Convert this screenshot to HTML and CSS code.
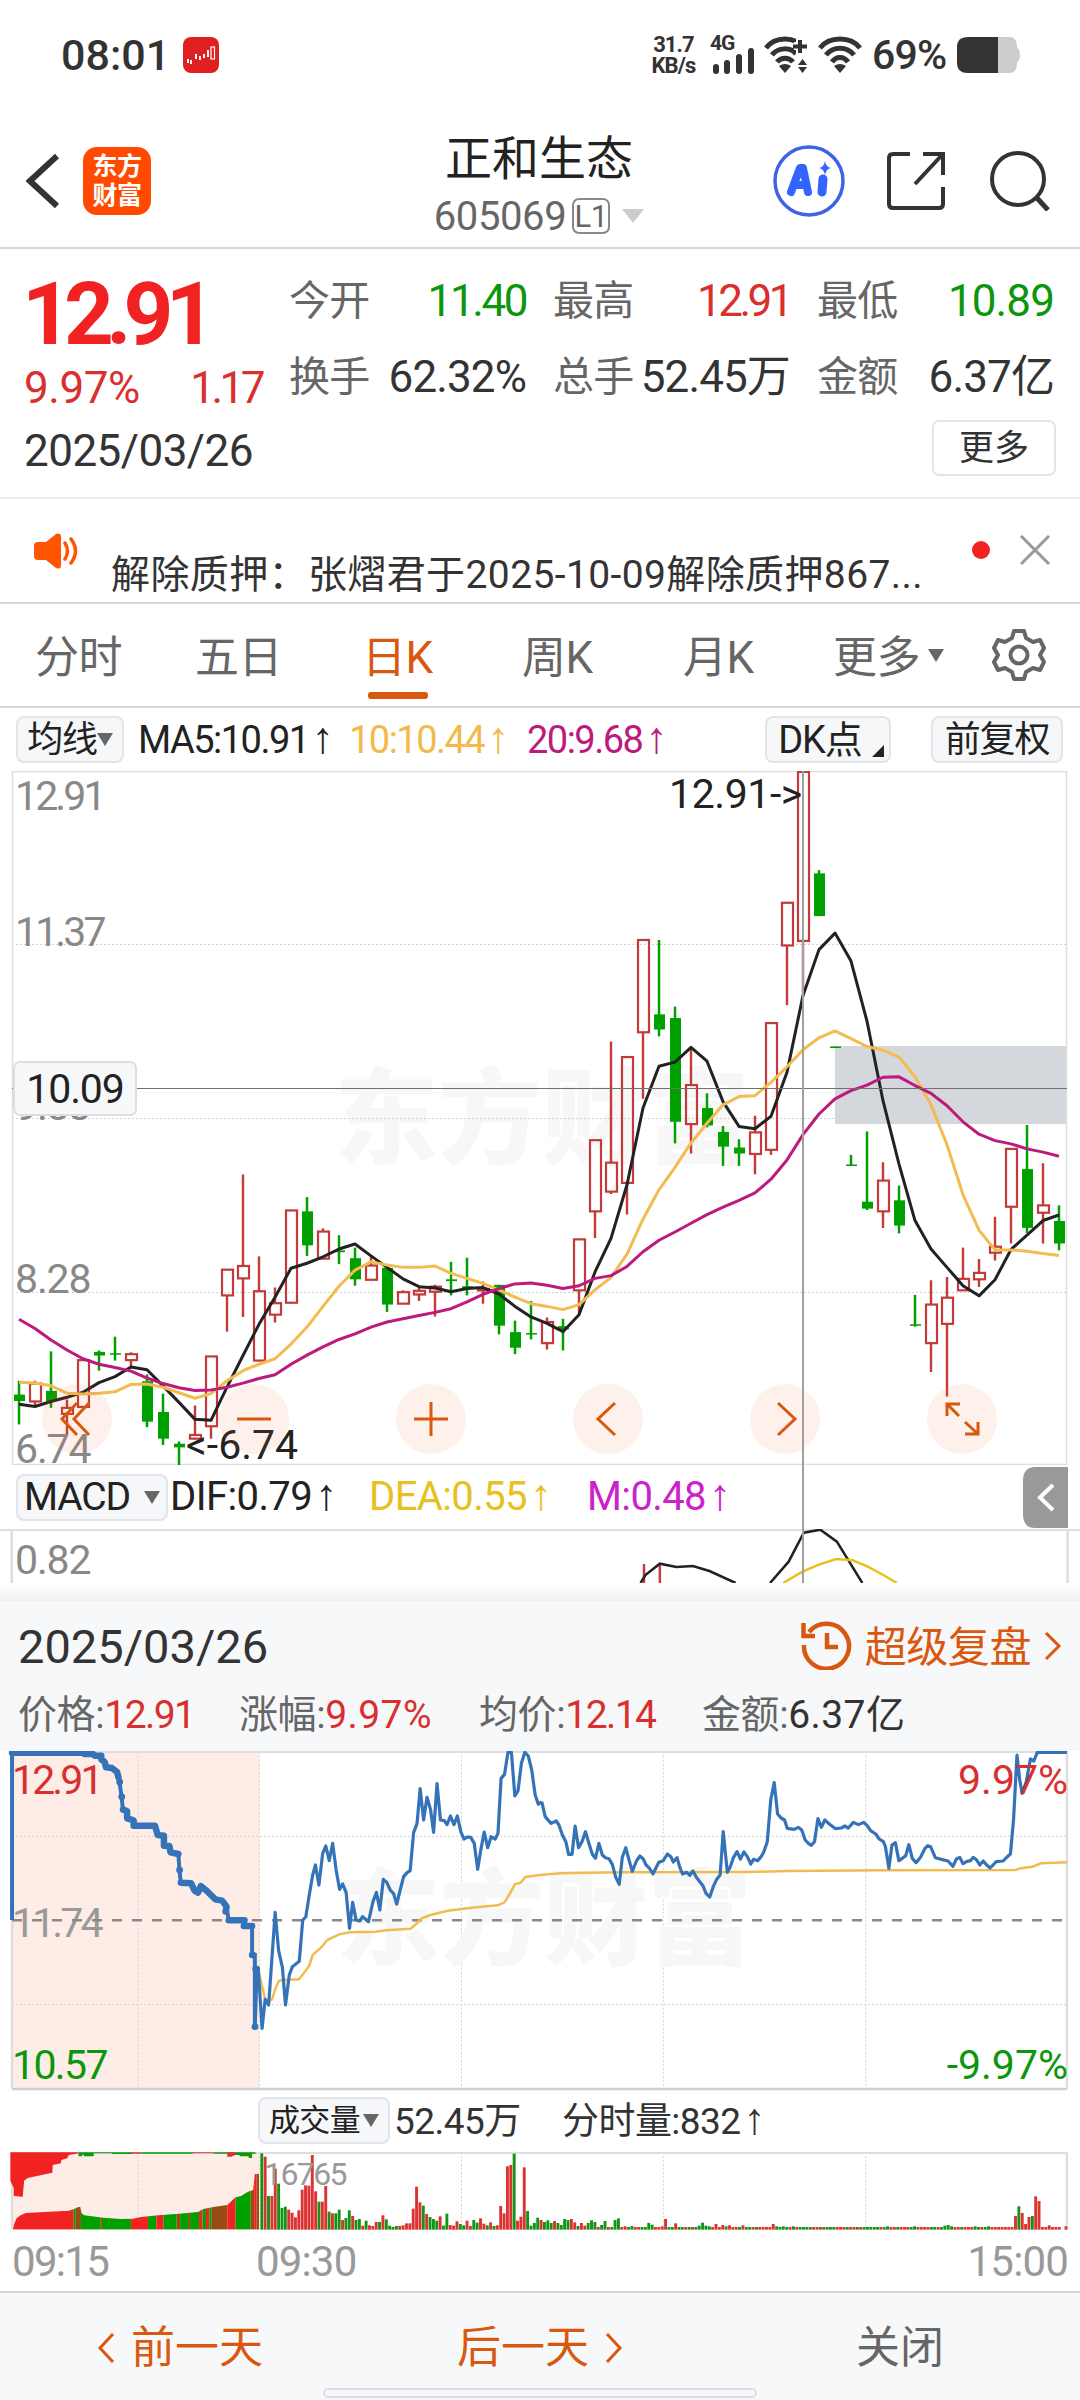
FILE: index.html
```html
<!DOCTYPE html>
<html lang="zh-CN">
<head>
    <meta charset="UTF-8">
    <meta name="viewport" content="width=device-width, initial-scale=1.0">
    <title>正和生态 605069</title>
    <link rel="stylesheet" href="styles.css">
</head>
<body>
    <!-- Status bar -->
    <div class="status-bar">
        <span class="clock">08:01</span>
        <svg class="app-dot" width="36" height="36" viewBox="0 0 36 36">
            <rect width="36" height="36" rx="8" fill="#e02020"/>
            <path d="M5 22v4M8 23v4M13 17v5M17 19v4M21 17v4M25 13v7" stroke="#fff" stroke-width="2"/>
            <rect x="28" y="10" width="3.5" height="12" fill="none" stroke="#fff" stroke-width="1.2"/>
        </svg>
        <div class="status-right">
            <div class="net-speed"><b>31.7</b><b>KB/s</b></div>
            <div class="signal">
                <b>4G</b>
                <svg width="46" height="26" viewBox="0 0 46 26">
                    <path d="M6 19v4M17 15v8M29 9v14M41 3v20" stroke="#333" stroke-width="6" stroke-linecap="round"/>
                </svg>
            </div>
            <svg class="wifi" width="46" height="38" viewBox="0 0 46 38">
                <g fill="none" stroke="#333" stroke-width="5">
                    <path d="M2 12C11 0 31 0 40 12"/>
                    <path d="M8 19C14 11 27 11 32 18"/>
                    <path d="M13 26C17 21 25 21 29 26"/>
                </g>
                <path d="M15 30q6-4 12 0l-6 7z" fill="#333"/>
                <path d="M36 3v15M30 10h14" stroke="#fff" stroke-width="8"/>
                <path d="M36 4v13M29 10.500h14" stroke="#333" stroke-width="4"/>
                <path d="M34 29l4.500-6 4.500 6zM34 31l4.500 6 4.500-6z" fill="#333"/>
            </svg>
            <svg class="wifi" width="44" height="38" viewBox="0 0 44 38">
                <g fill="none" stroke="#333" stroke-width="5">
                    <path d="M2 12C11 0 33 0 42 12"/>
                    <path d="M8 19C15 10 29 10 36 19"/>
                    <path d="M14 26C18 20 26 20 30 26"/>
                </g>
                <path d="M16 30q6-4 12 0l-6 7z" fill="#333"/>
            </svg>
            <span class="battery-text">69%</span>
            <svg width="63" height="36" viewBox="0 0 63 36">
                <path d="M40 0h12q8 0 8 9v2q3 1 3 7t-3 7v2q0 9-8 9H40z" fill="#ccc"/>
                <path d="M41 0v36H11Q0 36 0 26V10Q0 0 11 0z" fill="#333"/>
            </svg>
        </div>
    </div>

    <header>
        <div class="header-left">
            <svg width="34" height="56" viewBox="0 0 34 56"><path d="M31 3L4 28l27 25" fill="none" stroke="#333" stroke-width="6"/></svg>
            <div class="logo">东方<br>财富</div>
        </div>
        <div class="header-title">
            <h1>正和生态</h1>
            <div class="code"><span>605069</span><span class="level">L1</span><i class="tri light"></i></div>
        </div>
        <div class="header-icons">
            <svg class="ai" width="72" height="72" viewBox="0 0 72 72">
                <circle cx="36" cy="36" r="34" fill="#fff" stroke="#3f63e6" stroke-width="3.500"/>
                <path d="M18 47L27 23h3l5 24M21 40h12" fill="none" stroke="#3364ff" stroke-width="8" stroke-linecap="round" stroke-linejoin="round"/>
                <path d="M50 34L49 47" stroke="#3364ff" stroke-width="9" stroke-linecap="round"/>
                <path d="M52 16q1 6 6 7-5 1-6 7-1-6-6-7 5-1 6-7z" fill="#3364ff"/>
            </svg>
            <svg width="58" height="58" viewBox="0 0 58 58">
                <path d="M23 2H6Q2 2 2 6v46q0 4 4 4h46q4 0 4-4V35M36 2h20v21M55 3L28 32" fill="none" stroke="#333" stroke-width="4"/>
            </svg>
            <svg width="60" height="60" viewBox="0 0 60 60">
                <circle cx="28" cy="28" r="26" fill="none" stroke="#333" stroke-width="4"/>
                <path d="M46 46L58 59" stroke="#333" stroke-width="5"/>
            </svg>
        </div>
    </header>

    <!-- Quote summary -->
    <section class="quote">
        <div class="price-col">
            <div class="price">12.91</div>
            <div class="change"><span>9.97%</span><span class="n1">1.17</span></div>
        </div>
        <div class="stats">
            <div><label>今开</label><span class="green n1">11.40</span></div>
            <div><label>最高</label><span class="red n1">12.91</span></div>
            <div><label>最低</label><span class="green">10.89</span></div>
            <div><label>换手</label><span>62.32%</span></div>
            <div><label>总手</label><span>52.45万</span></div>
            <div><label>金额</label><span>6.37亿</span></div>
        </div>
        <div class="quote-date">2025/03/26</div>
        <button class="more-btn">更多</button>
    </section>

    <section class="notice">
        <svg class="speaker" width="46" height="36" viewBox="0 0 46 36">
            <path d="M4 9h8L22 1q5-2 5 3v28q0 5-5 3l-10-8H4q-4 0-4-4V13q0-4 4-4z" fill="#ff5500"/>
            <path d="M31 10q5 8 0 16M37 6q9 12 0 24" fill="none" stroke="#ff5500" stroke-width="3.500" stroke-linecap="round"/>
        </svg>
        <p>解除质押：张熠君于2025-10-09解除质押867...</p>
        <i class="dot"></i>
        <svg class="close" width="30" height="30" viewBox="0 0 30 30"><path d="M1 1l28 28M29 1L1 29" stroke="#999" stroke-width="3"/></svg>
    </section>

    <nav class="tabs">
        <a>分时</a>
        <a>五日</a>
        <a class="active">日K</a>
        <a>周K</a>
        <a>月K</a>
        <a>更多<i class="tri"></i></a>
        <svg width="54" height="54" viewBox="0 0 54 54" fill="none" stroke="#666" stroke-width="4">
            <path d="M22 3h10l2 7 7 4 7-2 4 8-4 7 4 7-4 8-7-2-7 4-2 7H22l-2-7-7-4-7 2-4-8 4-7-4-7 4-8 7 2 7-4z" stroke-linejoin="round"/>
            <circle cx="27" cy="27" r="8.500"/>
        </svg>
    </nav>

    <div class="ind-row ma-row">
        <button class="chip">均线<i class="tri"></i></button>
        <span class="ma5">MA5:10.91<em>↑</em></span>
        <span class="ma10">10:10.44<em>↑</em></span>
        <span class="ma20">20:9.68<em>↑</em></span>
        <button class="chip dk">DK点<i class="corner"></i></button>
        <button class="chip fq">前复权</button>
    </div>

    <!-- Daily candles -->
    <div class="k-chart">
        <div class="watermark">东方财富</div>
        <svg id="kline" width="1080" height="694" viewBox="0 0 1080 694">
            <g stroke="#d2d2d2" stroke-width="1" stroke-dasharray="2 2">
                <path d="M12 173.500H1067M12 347.500H1067M12 521.500H1067"/>
            </g>
            <rect x="835" y="275" width="232" height="78" fill="#d4d7dc"/>
            <rect x="12.500" y="0.500" width="1054" height="693" fill="none" stroke="#dedede" stroke-width="1.500"/>
            <g id="candles"></g>
        </svg>
        <span class="axis n1 a1">12.91</span>
        <span class="axis a2">11.37</span>
        <span class="axis a3">9.83</span>
        <span class="axis a4">8.28</span>
        <span class="axis a5">6.74</span>
        <span class="axis mark-high">12.91-&gt;</span>
        <span class="axis mark-low">&lt;-6.74</span>
        <i class="cross-x"></i>
        <i class="cross-y"></i>
        <span class="cross-price">10.09</span>
        <div class="tools">
            <svg viewBox="-35 -35 70 70"><path d="M0-16L-15 0 0 16M12-16L-3 0 12 16"/></svg>
            <svg viewBox="-35 -35 70 70"><path d="M-17 0H17"/></svg>
            <svg viewBox="-35 -35 70 70"><path d="M-17 0H17M0-17V17"/></svg>
            <svg viewBox="-35 -35 70 70"><path d="M7-16L-10 0 7 16"/></svg>
            <svg viewBox="-35 -35 70 70"><path d="M-7-16L10 0-7 16"/></svg>
            <svg viewBox="-35 -35 70 70"><path d="M-15-3V-15H-2M-15-15L-3-3M16 3V15H3M16 15L3 3"/></svg>
        </div>
    </div>

    <div class="ind-row macd-row">
        <button class="chip macd">MACD<i class="tri"></i></button>
        <span class="ma5">DIF:0.79<em>↑</em></span>
        <span class="dea">DEA:0.55<em>↑</em></span>
        <span class="m">M:0.48<em>↑</em></span>
        <svg class="drawer" width="45" height="61" viewBox="0 0 45 61">
            <path d="M45 0H12Q0 0 0 14V47Q0 61 12 61H45z" fill="#999"/>
            <path d="M30 18L17 30.500 30 43" fill="none" stroke="#fff" stroke-width="4"/>
        </svg>
    </div>
    <div class="macd-chart">
        <svg width="1080" height="54" viewBox="0 447 1568 162" preserveAspectRatio="none">
            <path class="line" stroke="#dedede" d="M17 609V447M1550 609V447"/>
            <path class="line" stroke="#c83c3c" d="M935 609V552M958 609V556"/>
            <path class="line" stroke="#222" d="M930 609L937 585 958 551 982 561 1006 558 1030 573 1068 609M1118 609L1145 545 1167 458 1191 449 1215 485 1252 609"/>
            <path class="line" stroke="#e8c020" d="M1137 609L1165 575 1190 553 1214 537 1238 541 1260 560 1285 588 1302 609"/>
        </svg>
        <span class="axis">0.82</span>
    </div>
    <div class="sheet-shadow"></div>

    <!-- Single day panel -->
    <section class="day-head">
        <div class="day-title">
            <span class="day-date">2025/03/26</span>
            <svg width="52" height="50" viewBox="0 0 52 50" fill="none" stroke="#d9580f" stroke-width="4.500">
                <path d="M8 12A22.500 22.500 0 1 1 3 25"/>
                <path d="M2.500 3v13H14M26 13v14h11"/>
            </svg>
            <span class="replay">超级复盘</span>
            <svg width="18" height="30" viewBox="0 0 18 30"><path d="M2 2l13 13L2 28" fill="none" stroke="#d9580f" stroke-width="3"/></svg>
        </div>
        <div class="day-stats">
            <span>价格:<b class="red">12.91</b></span>
            <span>涨幅:<b class="red wide">9.97%</b></span>
            <span>均价:<b class="red">12.14</b></span>
            <span>金额:<b class="wide">6.37亿</b></span>
        </div>
    </section>

    <div class="day-chart">
        <svg width="1080" height="340" viewBox="0 33 3136 1020" preserveAspectRatio="none">
            <rect x="35" y="35" width="718" height="1012" fill="#fdede6"/>
            <path class="grid" d="M35 289H3098M35 794H3098M400 35V1047M753 35V1047M1340 35V1047M1926 35V1047M2514 35V1047"/>
            <path class="line" stroke="#dedede" d="M35 1047V35H3098V1047"/>
            <path class="line" stroke="#cfcfcf" d="M35 1047H3098"/>
        </svg>
        <div class="watermark">东方财富</div>
        <span class="lbl n1 mid">11.74</span>
        <svg width="1080" height="340" viewBox="0 33 3136 1020" preserveAspectRatio="none">
            <path class="line" stroke="#888" stroke-dasharray="10 10" d="M35 541H3098"/>
            <polyline class="line" stroke="#f0bc50" points="750,690 770,778 780,783 790,778 800,745 810,723 820,720 868,718 882,700 898,677 908,645 935,620 950,600 985,583 1015,577 1090,575 1120,571 1192,566 1205,555 1225,535 1250,525 1300,512 1370,503 1445,496 1465,487 1478,465 1495,433 1512,428 1526,411 1568,405 1628,400 1698,398 1818,397 2168,396 2288,393 2568,391 2948,390 2963,385 2998,380 3023,370 3098,367"/>
            <!-- call auction -->
            <polyline class="line auction" points="35,540 35,37 232,37"/>
            <path class="line auction" d="M340 96L347 126 353 170 357 209M518 342L521 390 525 428M658 500L664 541M710 541V558H732V645H740V860L745 687"/>
            <path class="line ticks" d="M35 38H240L245 42H270L275 47H294V58L304 66 308 82 325 84 340 96 344 112M347 126h1M353 170h1M357 209L369 213V235L388 241V257H450L458 285 476 287V317L492 318 495 337 518 342M521 390h1M525 428L555 430 565 452 575 458 583 438 600 452 625 478 645 482 658 500 655 515M664 541H710M708 558H732M732 645h3M740 860h1M742 687h4"/>
            <polyline class="line price-line" points="745,687 750,687 761,865 770,778 780,795 799,517 809,632 820,682 829,795 840,705 849,680 869,664 879,541 888,530 898,465 908,405 916,375 926,435 937,340 946,318 956,362 966,310 976,390 986,448 995,432 1005,457 1015,565 1024,487 1034,540 1044,543 1053,530 1070,545 1083,485 1093,457 1103,510 1113,418 1123,427 1133,450 1143,461 1152,492 1162,450 1172,410 1182,398 1191,392 1201,278 1211,250 1220,146 1230,240 1240,172 1250,208 1259,277 1269,131 1279,240 1290,242 1298,254 1308,228 1318,254 1328,228 1338,275 1347,297 1357,291 1367,292 1377,310 1387,388 1397,325 1406,276 1416,323 1426,290 1438,297 1446,280 1455,115 1465,103 1475,37 1485,37 1495,168 1504,153 1514,70 1524,37 1534,48 1544,90 1554,165 1563,193 1573,185"/>
            <polyline class="line price-line" transform="translate(1568 0)" points="5,185 15,230 32,250 47,243 55,255 65,285 75,305 83,343 93,343 102,258 112,323 122,305 132,275 142,310 152,343 161,355 171,310 181,345 190,353 200,356 210,373 220,412 230,433 239,352 249,323 259,362 268,394 280,363 290,348 300,357 308,375 318,385 328,402 345,367 358,362 370,342 380,350 387,366 398,353 406,382 414,402 426,397 435,406 444,393 454,412 464,425 473,437 482,460 493,471 503,440 513,418 523,405 532,275 544,397 552,382 562,352 572,335 582,357 592,336 602,350 612,372 620,358 632,362 642,350 650,335 660,305 670,180 680,128 690,222 700,234 710,240 718,265 738,268 750,262 760,270 770,300 780,311 788,316 797,305 807,236 817,262 827,240 840,252 858,266 875,264 885,258 895,264 910,247 925,254 940,247 950,257 960,272 975,282 985,297 997,305 1003,320 1013,385 1022,315 1032,308 1042,362 1052,355 1062,347 1071,314 1081,355 1092,368 1105,352 1118,325 1126,317 1134,320 1148,353 1165,358 1185,363 1199,379 1209,357 1219,352 1228,371 1240,364 1250,362 1258,352 1268,360 1277,375 1287,363 1297,375 1307,384 1325,365 1345,363 1357,350 1366,342 1375,240 1385,45 1393,120 1400,160 1412,125 1424,57 1434,63 1444,37 1530,37"/>
        </svg>
        <span class="lbl n1 top red">12.91</span>
        <span class="lbl bottom green">10.57</span>
        <span class="lbl top right red">9.97%</span>
        <span class="lbl bottom right green">-9.97%</span>
    </div>

    <div class="vol-head">
        <button class="chip">成交量<i class="tri"></i></button>
        <span class="vol-total">52.45万</span>
        <span>分时量:832<em>↑</em></span>
    </div>
    <div class="vol-chart">
        <svg width="1080" height="78" viewBox="0 36 3136 234" preserveAspectRatio="none">
            <defs>
                <clipPath id="pre">
                    <polygon points="37,269 42,250 48,235 60,226 75,219 200,212 215,207 228,201 233,201 237,220 245,226 300,233 350,237 385,236 410,231 460,226 520,221 575,216 590,207 620,201 660,195 684,172 700,168 720,155 735,150 740,102 752,101 752,269"/>
                </clipPath>
            </defs>
            <rect x="35" y="37" width="718" height="232" fill="#fdede6"/>
            <path class="grid" d="M400 37V269M753 37V269M1340 37V269M1926 37V269M2514 37V269"/>
            <path class="line" stroke="#dedede" d="M35 269V38H3098V269"/>
            <g id="pre-vol" clip-path="url(#pre)"></g>
            <polygon fill="#f02222" points="30,37 30,122 40,145 40,168 66,170 70,122 80,114 152,98 153,75 177,70 178,60 195,55 200,45 228,40 228,37"/>
            <path fill="#0c990c" d="M228 37v12h10v-5h5v5h29v-9h53v2h58v-5zM410 37v4h150v-4zM620 37v4h122v-4zM682 37v8h14v4h26v5h10v-13h10v-4z"/>
            <path fill="#e03030" d="M380 37v4h30v-4zM560 37v3h60v-3zM660 37v13h12l12-6v-7z"/>
            <g id="vol"></g>
        </svg>
        <span class="vol-max">16765</span>
    </div>
    <div class="times"><span>09:15</span><span class="t2">09:30</span><span>15:00</span></div>

    <footer>
        <a class="prev"><svg width="18" height="30" viewBox="0 0 18 30"><path d="M16 1L3 15l13 14"/></svg>前一天</a>
        <a class="next">后一天<svg width="18" height="30" viewBox="0 0 18 30"><path d="M2 1l13 14L2 29"/></svg></a>
        <a class="shut">关闭</a>
        <i class="home-bar"></i>
    </footer>

    <script src="chart.js"></script>
</body>
</html>
```
FILE: styles.css
```css
* {
    box-sizing: border-box;
}

body {
    width: 1080px;
    height: 2400px;
    margin: 0;
    overflow: hidden;
    background: #fff;
    color: #333;
    font-family: Roboto, "Noto Sans CJK SC", sans-serif;
    font-size: 38px;
    letter-spacing: -0.03em;
    position: relative;
}

svg {
    display: block;
    flex: none;
}

button {
    font-family: inherit;
    letter-spacing: inherit;
    color: inherit;
    padding: 0;
}

em {
    font-style: normal;
    font-family: "Liberation Sans", sans-serif;
    font-size: 44px;
    line-height: 36px;
    margin-left: 3px;
    letter-spacing: 0;
}

.red {
    color: #d92f2f;
}

.green {
    color: #0c960c;
}

.tri {
    display: inline-block;
    border: 8px solid transparent;
    border-top: 13px solid #666;
    border-bottom: 0;
}

.tri.light {
    border-width: 14px 11px 0;
    border-top-color: #ccc;
}

/* status bar */
.status-bar {
    height: 110px;
    padding: 0 60px 0 61px;
    display: flex;
    align-items: center;
}

.clock {
    font-size: 43px;
    font-weight: 500;
    letter-spacing: 0;
    width: 122px;
}

.status-right {
    margin-left: auto;
    display: flex;
    align-items: center;
}

.net-speed {
    width: 47px;
    margin-right: 13px;
    font-size: 22px;
    line-height: 21px;
    letter-spacing: -0.04em;
    text-align: center;
}

.net-speed b {
    display: block;
}

.signal {
    width: 46px;
    height: 38px;
    font-size: 21px;
    letter-spacing: -0.05em;
}

.signal b {
    display: block;
    height: 12px;
    line-height: 14px;
}

.wifi {
    margin-left: 8px;
}

.battery-text {
    font-size: 41px;
    font-weight: 500;
    width: 92px;
    padding-left: 10px;
    margin-right: 3px;
    letter-spacing: -0.02em;
}

/* header */
header {
    height: 139px;
    padding: 0 30px 0 26px;
    display: grid;
    grid-template-columns: 300px 1fr 300px;
    border-bottom: 2px solid #d6d6d6;
}

.header-left {
    display: flex;
    align-items: center;
    gap: 23px;
    height: 142px;
}

.logo {
    width: 68px;
    height: 68px;
    padding-top: 5px;
    border-radius: 14px;
    background: #ff4a00;
    color: #fff;
    font-size: 25px;
    line-height: 29px;
    font-weight: 700;
    text-align: center;
    letter-spacing: -0.02em;
}

.header-title {
    text-align: center;
    padding: 18px 0 0 2px;
}

h1 {
    margin: 0;
    font-size: 47px;
    line-height: 62px;
    font-weight: 400;
    letter-spacing: 0;
    color: #222;
}

.code {
    display: flex;
    align-items: center;
    justify-content: center;
    height: 52px;
    font-size: 40px;
    letter-spacing: -0.01em;
    color: #666;
}

.level {
    border: 2px solid #888;
    border-radius: 7px;
    width: 38px;
    height: 36px;
    margin: 0 12px 0 6px;
    font-size: 31px;
    line-height: 33px;
}

.header-icons {
    display: flex;
    align-items: center;
    justify-content: flex-end;
    gap: 45px;
    height: 142px;
}

.ai {
    margin-right: -3px;
}

/* quote */
.quote {
    height: 250px;
    padding: 19px 25px 0 24px;
    display: grid;
    grid-template-columns: 238px 1fr;
    grid-template-rows: 151px 64px;
    column-gap: 27px;
    border-bottom: 2px solid #eee;
}

.price {
    font-size: 87px;
    line-height: 92px;
    font-weight: 700;
    letter-spacing: -0.09em;
    margin-left: -2px;
    color: #f02222;
}

.change {
    display: flex;
    justify-content: space-between;
    font-size: 44px;
    line-height: 57px;
    letter-spacing: -0.01em;
    color: #d92f2f;
}

.change .n1 {
    letter-spacing: -0.08em;
}

.stats {
    display: grid;
    grid-template-columns: 237px 237px 237px;
    grid-template-rows: 76px 76px;
    column-gap: 27px;
}

.stats div {
    display: flex;
    justify-content: space-between;
    align-items: center;
    white-space: nowrap;
    font-size: 44px;
    line-height: 76px;
    letter-spacing: -0.02em;
    margin-top: -11px;
}

.stats label {
    font-size: 41px;
    letter-spacing: -0.02em;
    color: #666;
}

.n1,
.stats .n1 {
    letter-spacing: -0.055em;
}

.stats .red {
    letter-spacing: -0.08em;
}

.quote-date {
    font-size: 44px;
    line-height: 64px;
    letter-spacing: -0.012em;
}

.more-btn {
    justify-self: end;
    width: 124px;
    height: 56px;
    margin: 1px -1px 0 0;
    border: 2px solid #e4e4e4;
    border-radius: 7px;
    background: #fff;
    font-size: 35px;
    line-height: 50px;
    padding-top: 2px;
    letter-spacing: 0;
}

/* notice */
.notice {
    height: 105px;
    display: flex;
    padding: 0 30px 0 34px;
    border-bottom: 2px solid #d6d6d6;
}

.speaker {
    margin-top: 34px;
}

.notice p {
    margin: 47px 0 0 31px;
    font-size: 39px;
    line-height: 58px;
    white-space: nowrap;
    width: 861px;
    letter-spacing: 0.01em;
}

.dot {
    width: 18px;
    height: 18px;
    flex: none;
    border-radius: 50%;
    background: #f02222;
    margin: 42px 30px 0 0;
}

.close {
    margin-top: 36px;
}

/* period tabs */
.tabs {
    height: 104px;
    padding: 0 0 0 35px;
    display: grid;
    grid-template-columns: 160px 170px 157px 161px 150px 159px 54px;
    align-items: center;
    border-bottom: 2px solid #d6d6d6;
    color: #666;
    font-size: 44px;
}

.tabs a {
    position: relative;
    line-height: 109px;
    height: 102px;
    letter-spacing: -0.01em;
}

.tabs .active {
    color: #d9580f;
    text-indent: -3px;
}

.tabs .active::after {
    content: "";
    position: absolute;
    left: 3px;
    bottom: 7px;
    width: 60px;
    height: 7px;
    border-radius: 3px;
    background: #d9580f;
}

.tabs .tri {
    margin-left: 8px;
    vertical-align: 11px;
}

/* indicator rows */
.ind-row {
    display: flex;
    align-items: center;
    white-space: nowrap;
    font-size: 38px;
}

.ind-row span {
    line-height: 44px;
}

.chip {
    height: 47px;
    border: 2px solid #e2e4e9;
    border-radius: 8px;
    background: #f6f7f9;
    color: #222;
    font-size: 36px;
    line-height: 40px;
    white-space: nowrap;
    position: relative;
}

.ma-row {
    height: 63px;
    padding-left: 16px;
}

.ma-row .chip:first-child {
    width: 108px;
    margin-right: 14px;
}

.ma5 {
    color: #222;
    width: 211px;
}

.ma10 {
    color: #f2ba4a;
    width: 178px;
}

.ma20 {
    color: #bc1a7c;
    width: 238px;
}

.ma-row span {
    letter-spacing: -0.04em;
}

.chip .tri {
    vertical-align: 6px;
}

.dk {
    width: 126px;
    padding-right: 16px;
    margin-right: 40px;
    font-size: 38px;
}

.corner {
    position: absolute;
    right: 5px;
    bottom: 4px;
    border-left: 12px solid transparent;
    border-bottom: 12px solid #222;
}

.fq {
    width: 132px;
}

/* daily chart */
.k-chart {
    position: relative;
    height: 694px;
}

.k-chart svg {
    position: relative;
}

.watermark {
    position: absolute;
    left: 334px;
    top: 280px;
    font-size: 104px;
    font-weight: 900;
    line-height: 140px;
    letter-spacing: 0;
    color: #f7f7f7;
}

.axis {
    position: absolute;
    left: 15px;
    font-size: 41px;
    line-height: 48px;
    color: #888;
}

.axis.n1,
.lbl.n1 {
    letter-spacing: -0.07em;
}

.a1 { top: 1px; }
.a2 { top: 137px; letter-spacing: -0.07em; }
.a3 { top: 311px; }
.a4 { top: 484px; }
.a5 { top: 654px; }

.mark-high {
    left: 669px;
    top: -1px;
    color: #222;
    letter-spacing: -0.01em;
}

.mark-low {
    left: 186px;
    top: 650px;
    color: #222;
    letter-spacing: 0;
}

.cross-x {
    position: absolute;
    left: 12px;
    top: 317px;
    width: 1055px;
    height: 1px;
    background: #707070;
}

.cross-y {
    position: absolute;
    left: 802px;
    top: 0;
    width: 2px;
    height: 812px;
    background: #a0a0a0;
    z-index: 2;
}

.cross-price {
    position: absolute;
    left: 13px;
    top: 290px;
    width: 124px;
    height: 55px;
    border: 2px solid #dcdee3;
    border-radius: 7px;
    background: #f7f8fa;
    color: #222;
    font-size: 41px;
    line-height: 52px;
    text-align: center;
}

.tools {
    position: absolute;
    left: 42px;
    top: 613px;
    display: flex;
    gap: 107px;
}

.tools svg {
    width: 70px;
    height: 70px;
    border-radius: 50%;
    background: rgba(250, 110, 50, 0.1);
    fill: none;
    stroke: #d9580f;
    stroke-width: 3;
}

/* macd */
.macd-row {
    height: 64px;
    padding-left: 16px;
}

.macd-row span {
    font-size: 40px;
    letter-spacing: -0.015em;
}

.macd {
    width: 152px;
    margin-right: 2px;
    font-size: 39px;
}

.macd .tri {
    margin-left: 14px;
}

.macd-row .ma5 {
    width: 199px;
}

.dea {
    color: #e8c020;
    width: 218px;
}

.m {
    color: #cc22cc;
}

.drawer {
    margin-left: auto;
    margin-right: 12px;
}

.macd-chart {
    height: 54px;
    position: relative;
    overflow: hidden;
    box-shadow: inset 0 2px #dedede;
}

.macd-chart .axis {
    top: 7px;
}

.line {
    fill: none;
    stroke-width: 2.5;
    vector-effect: non-scaling-stroke;
}

.sheet-shadow {
    height: 18px;
    background: linear-gradient(#fff, #f1f1f2);
}

/* single day */
.day-head {
    height: 150px;
    background: #f7f8fa;
    padding: 12px 18px 0 18px;
}

.day-title {
    display: flex;
    align-items: center;
    height: 66px;
}

.day-date {
    font-size: 47px;
    letter-spacing: 0;
    flex: 1;
}

.day-title svg:first-of-type {
    margin-top: -3px;
}

.replay {
    color: #d9580f;
    font-size: 42px;
    letter-spacing: -0.01em;
    margin: -5px 13px 0 12px;
}

.day-stats {
    display: grid;
    grid-template-columns: 221px 240px 223px 1fr;
    line-height: 72px;
    color: #666;
    font-size: 39px;
}

.day-stats span {
    letter-spacing: -0.01em;
}

.day-stats b {
    font-weight: 400;
    letter-spacing: -0.04em;
}

.day-stats .wide {
    letter-spacing: 0.01em;
}

.day-stats b:not(.red) {
    color: #333;
}

.day-chart {
    position: relative;
    height: 340px;
}

.day-chart svg {
    position: absolute;
    left: 0;
    top: 0;
}

.day-chart .watermark {
    left: 336px;
    top: 101px;
}

.grid {
    fill: none;
    stroke: #d2d2d2;
    stroke-width: 1;
    stroke-dasharray: 2 2;
    vector-effect: non-scaling-stroke;
}

.auction {
    stroke: #3573b9;
    stroke-width: 4;
}

.ticks {
    stroke: #3573b9;
    stroke-width: 6.5;
    stroke-linecap: round;
    stroke-linejoin: round;
}

.price-line {
    stroke: #3573b9;
    stroke-width: 3.2;
    stroke-linejoin: round;
}

.lbl {
    position: absolute;
    left: 12px;
    font-size: 41px;
    line-height: 48px;
    letter-spacing: -0.04em;
}

.lbl.top { top: 5px; }
.lbl.mid { top: 148px; color: #999; }
.lbl.bottom { top: 290px; }

.lbl.right {
    left: auto;
    right: 12px;
    letter-spacing: 0;
}

/* volume */
.vol-head {
    height: 61px;
    padding: 0 0 2px 258px;
    display: flex;
    align-items: center;
    white-space: nowrap;
    font-size: 37px;
    letter-spacing: -0.015em;
}

.vol-head span {
    line-height: 44px;
    margin-top: 2px;
}

.vol-head .chip {
    width: 132px;
    font-size: 31px;
    letter-spacing: -0.02em;
    margin-right: 4px;
}

.vol-head .tri {
    margin-left: 3px;
    vertical-align: 4px;
}

.vol-total {
    width: 168px;
}

.vol-chart {
    position: relative;
    height: 78px;
}

.vol-max {
    position: absolute;
    left: 264px;
    top: 4px;
    font-size: 32px;
    line-height: 36px;
    letter-spacing: -0.05em;
    color: #999;
}

.times {
    height: 61px;
    padding: 0 12px;
    display: flex;
    justify-content: space-between;
    line-height: 63px;
    font-size: 42px;
    letter-spacing: -0.02em;
    color: #999;
}

.times span:first-child {
    width: 244px;
    letter-spacing: -0.04em;
}

.t2 {
    flex: 1;
}

footer {
    position: relative;
    height: 110px;
    border-top: 2px solid #d6d6d6;
    background: #f7f8fa;
    color: #d9580f;
    display: grid;
    grid-template-columns: 360px 360px 360px;
    font-size: 44px;
    line-height: 110px;
    letter-spacing: 0;
}

footer a {
    display: flex;
    align-items: center;
    justify-content: center;
    gap: 16px;
}

footer svg {
    fill: none;
    stroke: #d9580f;
    stroke-width: 3;
}

.shut {
    color: #666;
}

.home-bar {
    position: absolute;
    left: 323px;
    bottom: 3px;
    width: 434px;
    height: 10px;
    border: 2px solid #dcdee2;
    border-radius: 5px;
}
```
FILE: chart.js
```js
const NS = 'http://www.w3.org/2000/svg';

function add(parent, tag, attrs) {
    const el = document.createElementNS(NS, tag);
    for (const key in attrs) el.setAttribute(key, attrs[key]);
    parent.appendChild(el);
}

// colour, high, body top, body bottom, low
const candles = `g 1352 1382 1396 1447|r 1352 1358 1397 1405|g 1288 1374 1396 1411|r 1393 1411 1424 1470
r 1307 1307 1409 1409|g 1286 1289 1297 1330|g 1256 1292 1295 1308|r 1290 1294 1307 1320
g 1338 1353 1441 1453|g 1380 1420 1478 1492|g 1484 1489 1497 1536|r 1406 1470 1478 1480
r 1299 1299 1451 1478|r 1110 1110 1166 1245|r 903 1102 1129 1213|r 1081 1157 1308 1308
r 1149 1183 1208 1225|r 981 981 1182 1182|g 952 983 1057 1080|r 1020 1027 1086 1086
g 1035 1068 1072 1098|g 1062 1085 1131 1145|r 1082 1101 1132 1132|g 1106 1106 1186 1202
r 1155 1159 1184 1184|r 1150 1156 1164 1178|r 1143 1147 1158 1212|g 1093 1131 1135 1166
g 1084 1146 1150 1166|r 1136 1152 1155 1184|g 1143 1143 1232 1251|g 1221 1246 1280 1294
g 1178 1248 1251 1262|r 1214 1224 1270 1284|g 1217 1233 1240 1286|r 1044 1044 1155 1205
r 828 828 983 1041|r 613 877 940 945|r 647 647 921 990|r 392 392 593 738
g 392 554 587 602|g 537 562 788 835|r 628 708 793 857|g 726 758 796 800
g 797 810 842 884|g 826 844 857 884|r 775 811 858 902|r 573 573 849 860
r 311 311 404 534|r 26 26 394 515|g 240 247 340 340|g 624 624 626 626
g 860 881 884 884|g 809 962 977 980|r 876 916 983 1019|g 927 959 1014 1031
g 1165 1229 1232 1234|r 1133 1186 1270 1333|r 1126 1171 1228 1386|r 1062 1130 1155 1155
r 1087 1117 1131 1148|r 995 1060 1073 1090|r 847 847 973 1053|g 795 891 1019 1030
r 878 970 986 1053|g 970 1004 1053 1068`.split(/[|\n]/);

const averages = {
    '#222': [1403,1408,1397,1388,1377,1356,1343,1322,1328,1363,1399,1436,1438,1366,1297,1229,1170,1107,1096,1082,1065,1054,1080,1105,1130,1147,1150,1158,1151,1149,1163,1190,1213,1227,1245,1208,1115,1042,925,758,667,658,626,656,744,798,803,776,680,513,413,377,438,569,742,880,1003,1065,1105,1145,1167,1132,1066,1035,1003,991],
    '#f2bc50': [1355,1357,1363,1379,1381,1379,1376,1360,1359,1366,1378,1390,1380,1352,1330,1316,1304,1272,1235,1190,1146,1111,1093,1100,1105,1105,1102,1118,1129,1140,1154,1170,1184,1190,1197,1186,1154,1127,1076,1000,936,887,834,791,751,733,731,702,668,631,605,590,607,624,632,647,690,751,838,947,1024,1067,1067,1070,1075,1079],
    '#bc1a7c': [1218,1238,1263,1285,1304,1316,1323,1331,1346,1358,1367,1373,1372,1366,1357,1347,1339,1316,1296,1278,1262,1250,1235,1224,1217,1210,1203,1195,1180,1164,1151,1141,1139,1144,1151,1145,1129,1123,1103,1071,1046,1028,1009,990,974,959,943,913,871,816,771,738,720,708,691,690,709,726,753,788,815,829,836,847,854,863]
};

const toY = v => (v - 24) / 2.1778;
const toX = i => 19 + i * 16;

const kline = document.getElementById('candles');
candles.forEach((row, i) => {
    const [type, ...v] = row.split(' ');
    const [high, top, bottom, low] = v.map(n => toY(+n));
    const x = toX(i);
    if (type === 'g') {
        add(kline, 'path', { d: `M${x} ${high}V${low}`, stroke: '#00a000', 'stroke-width': 2.5 });
        add(kline, 'rect', { x: x - 5, y: top, width: 11, height: Math.max(1.5, bottom - top), fill: '#00a000' });
    } else {
        add(kline, 'path', { d: `M${x} ${high}V${top}M${x} ${bottom}V${low}`, stroke: '#c23a3a', 'stroke-width': 2.4 });
        add(kline, 'rect', { x: x - 5, y: top, width: 11, height: Math.max(1.5, bottom - top), fill: 'none', stroke: '#c23a3a', 'stroke-width': 2.2 });
    }
});
for (const color in averages) {
    const points = averages[color].map((v, i) => toX(i) + ',' + toY(v)).join(' ');
    add(kline, 'polyline', { points, fill: 'none', stroke: color, 'stroke-width': 3, 'stroke-linejoin': 'round' });
}

// auction volume: [start, colour]
const bands = [[30, 'r'], [214, 'g'], [220, 'b'], [235, 'g'], [291, 'b'], [296, 'g'], [380, 'r'], [430, 'g'], [454, 'r'], [475, 'g'], [513, 'b'], [523, 'g'], [546, 'b'], [552, 'g'], [578, 'r'], [588, 'g'], [598, 'r'], [608, 'g'], [615, 'b'], [660, 'r'], [684, 'g'], [728, 'b'], [738, 'r'], [745, 'b'], [752, 'g']];
const fills = { r: '#f02222', g: '#00a000', b: '#9c4a14' };
const pre = document.getElementById('pre-vol');
for (let i = 0; i < bands.length - 1; i++) {
    add(pre, 'rect', { x: bands[i][0], y: 37, width: bands[i + 1][0] - bands[i][0], height: 232, fill: fills[bands[i][1]] });
}

// minute volume
const volume = ('g229 r219 g101 r101 r183 g138 g65 g69 r60 r51 r37 r58 r120 r133 r132 r224 r115 g84 r84 r131 g54 r49 g49 g60 r29 g35 g58 r41 g29 g32 r12 g27 r13 r11 r23 g23 r43 g31 g12 g8 g11 r11 r13 r19 r19 r63 r129 r82 g72 r47 g38 g32 g27 r40 g12 g48 r14 r12 r25 g17 g13 r27 r11 g29 g21 r34 r18 g13 r22 g11 r13 r71 r49 r190 r194 g228 r27 r39 r187 g56 g12 g20 g36 ' +
    'r29 g23 g28 g20 r26 g20 g14 g32 g29 r32 r22 g11 r20 r12 g20 g28 g23 r8 g14 g26 r8 g8 g29 g34 r8 r10 g8 g11 r8 r8 g8 g8 g20 g15 r8 r8 r10 r32 g8 g8 r19 g8 g8 r8 g8 r8 g8 g12 g21 g12 g10 r8 r17 r8 r14 g10 r13 r8 r8 g8 r13 g8 g8 r8 g8 r8 r8 r8 r8 r17 g10 g8 g10 g8 r8 g10 r8 g8 g8 g8 g8 r8 r8 g8 r8 g8 g8 g8 r8 r8 r8 g8 r8 r8 g8 r8 g8 g8 g8 g8 g8 r8 g8 g10 r8 r8 g8 r8 r8 r8 g8 g10 r8 r8 r8 r8 g8 g8 r8 g8 g12 g14 g10 r8 r8 g8 r8 r8 r8 g10 g8 r8 g8 g10 r8 r8 r8 r8 r8 r8 r8 r41 g70 r50 r17 r38 g41 r100 r86 r8 r8 r13 r8 r8 r8 r0 r10').split(' ');
const vol = document.getElementById('vol');
volume.forEach((item, i) => {
    const h = +item.slice(1);
    add(vol, 'rect', { x: 756 + i * 9.77, y: 269 - h, width: 8.4, height: h, fill: item[0] === 'r' ? '#dc3232' : '#149414' });
});
```
